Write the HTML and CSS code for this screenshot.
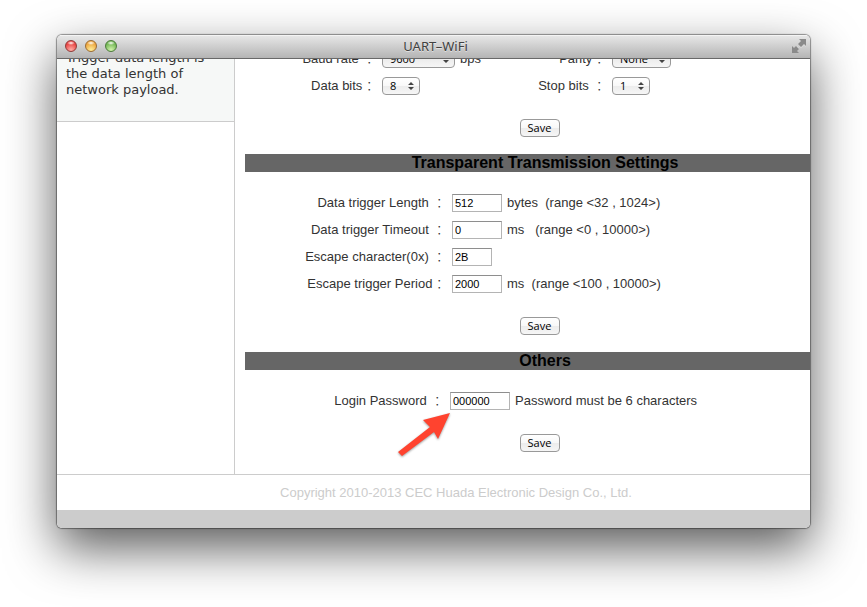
FILE: index.html
```html
<!DOCTYPE html>
<html lang="en">
<head>
<meta charset="utf-8">
<title>UART-WiFi</title>
<link rel="stylesheet" href="styles.css">
</head>
<body>
<div class="window">
  <header class="titlebar">
    <div class="lights">
      <button class="light red" type="button" aria-label="Close"></button>
      <button class="light amber" type="button" aria-label="Minimize"></button>
      <button class="light green" type="button" aria-label="Zoom"></button>
    </div>
    <h1 class="title">UART–WiFi</h1>
    <button class="expand" type="button" aria-label="Full screen">
      <svg viewBox="0 0 14 14" width="14" height="14"><path class="glint" d="M7 1H14V8L12 6L9 9L7 7L10 4Z"/><path class="glint" d="M0 8L2 10L5 7L7 9L4 12L6 14L0 15Z"/><path d="M7 0H14V7L12 5L9 8L6 5L9 2Z"/><path d="M0 7L2 9L4 7L7 10L5 12L7 14H0Z"/></svg>
    </button>
  </header>
  <div class="viewport">
    <div class="page">
      <div class="columns">
        <aside class="sidebar">
          <p class="help">Trigger data length is the data length of network payload.</p>
        </aside>
        <main class="main">
          <form class="section">
            <div class="pairs">
              <label for="baud">Baud rate&nbsp; <span lang="zh-CN">：</span></label>
              <div class="field"><span class="picker"><select id="baud" class="wide"><option>9600</option></select><svg viewBox="0 0 6 8" width="6" height="8"><path d="M3 0L6 3H0ZM3 8L6 5H0Z"/></svg></span> bps</div>
              <label for="parity">Parity <span lang="zh-CN">：</span></label>
              <div class="field"><span class="picker"><select id="parity" class="medium"><option>None</option></select><svg viewBox="0 0 6 8" width="6" height="8"><path d="M3 0L6 3H0ZM3 8L6 5H0Z"/></svg></span></div>
              <label for="databits">Data bits <span lang="zh-CN">：</span></label>
              <div class="field"><span class="picker"><select id="databits"><option>8</option></select><svg viewBox="0 0 6 8" width="6" height="8"><path d="M3 0L6 3H0ZM3 8L6 5H0Z"/></svg></span></div>
              <label for="stopbits">Stop bits&nbsp; <span lang="zh-CN">：</span></label>
              <div class="field"><span class="picker"><select id="stopbits"><option>1</option></select><svg viewBox="0 0 6 8" width="6" height="8"><path d="M3 0L6 3H0ZM3 8L6 5H0Z"/></svg></span></div>
            </div>
            <div class="actions"><button class="save" type="button">Save</button></div>
          </form>
          <form class="section">
            <h2>Transparent Transmission Settings</h2>
            <div class="rows">
              <label for="length">Data trigger Length&nbsp; <span lang="zh-CN">：</span></label>
              <div class="field"><input id="length" type="text" value="512"> bytes&nbsp; (range &lt;32 , 1024&gt;)</div>
              <label for="timeout">Data trigger Timeout&nbsp; <span lang="zh-CN">：</span></label>
              <div class="field"><input id="timeout" type="text" value="0"> ms&nbsp;&nbsp; (range &lt;0 , 10000&gt;)</div>
              <label for="escape">Escape character(0x)&nbsp; <span lang="zh-CN">：</span></label>
              <div class="field"><input id="escape" class="short" type="text" value="2B"></div>
              <label for="period">Escape trigger Period <span lang="zh-CN">：</span></label>
              <div class="field"><input id="period" type="text" value="2000"> ms&nbsp; (range &lt;100 , 10000&gt;)</div>
            </div>
            <div class="actions"><button class="save" type="button">Save</button></div>
          </form>
          <form class="section">
            <h2>Others</h2>
            <div class="rows login">
              <label for="password">Login Password&nbsp; <span lang="zh-CN">：</span></label>
              <div class="field"><input id="password" class="long" type="text" value="000000"> Password must be 6 characters
                <svg class="pointer" viewBox="0 0 56 48" width="56" height="48"><path d="M53 2L41 28L37 21L5 45L1 41L33 16L26 9Z"/></svg>
              </div>
            </div>
            <div class="actions"><button class="save" type="button">Save</button></div>
          </form>
        </main>
      </div>
      <footer class="footer">Copyright 2010-2013 CEC Huada Electronic Design Co., Ltd.</footer>
    </div>
  </div>
  <div class="statusbar"></div>
</div>
</body>
</html>
```
FILE: styles.css
```css
* { box-sizing: border-box; }

body {
  margin: 0;
  height: 100vh;
  padding: 35px 57px 79px;
  overflow: hidden;
  background: #fff;
  color: #333;
  font: 13px/18px "Liberation Sans", Arial, sans-serif;
}

h1, h2, p { margin: 0; }
button { padding: 0; border: 0; background: none; }
svg { display: block; }

.window {
  display: flex;
  flex-direction: column;
  height: 100%;
  overflow: hidden;
  border-radius: 5px;
  background: #fff;
  box-shadow: 0 0 1px 1px rgba(0, 0, 0, .4), 0 20px 50px rgba(0, 0, 0, .65);
}

.titlebar {
  flex: none;
  display: grid;
  grid-template-columns: 1fr auto 1fr;
  align-items: center;
  height: 24px;
  padding: 0 4px 2px 8px;
  border-top: 1px solid #f4f4f4;
  border-bottom: 1px solid #686868;
  background: linear-gradient(#e6e6e6, #b4b4b4);
}

.lights { display: flex; gap: 8px; }

.light {
  width: 12px;
  height: 12px;
  border: 1px solid;
  border-radius: 50%;
}

.red { border-color: #8f3a38; background: radial-gradient(ellipse 4px 2px at 50% 20%, #fff, transparent), radial-gradient(circle at 50% 90%, #ffb0a8, #e8403f 70%); }
.amber { border-color: #9a6b32; background: radial-gradient(ellipse 4px 2px at 50% 20%, #fff, transparent), radial-gradient(circle at 50% 90%, #fff09a, #eda43c 70%); }
.green { border-color: #4c7a3b; background: radial-gradient(ellipse 4px 2px at 50% 20%, #fff, transparent), radial-gradient(circle at 50% 90%, #d4f5ae, #70b552 70%); }

.title {
  color: #404040;
  font: 13px/18px "Noto Sans", "Open Sans", sans-serif;
  text-shadow: 0 1px 0 rgba(255, 255, 255, .5);
}

.expand { justify-self: end; fill: #8a8a8a; }
.glint { fill: #dcdcdc; }

.viewport {
  flex: 1;
  min-height: 0;
  display: flex;
  flex-direction: column;
  justify-content: flex-end;
  overflow: hidden;
}

.page { flex: none; min-width: 798px; }
.columns { display: flex; }

.sidebar {
  flex: none;
  width: 178px;
  border-right: 1px solid #ccc;
}

.help {
  padding: 5px 9px 23px;
  border-bottom: 1px solid #ccc;
  background: #f6f8f7;
  font: 13px/16px "DejaVu Sans", Verdana, sans-serif;
}

.main { flex: 1; padding: 0 10px 22px; }

.section + .section { margin-top: 17px; }

h2 {
  margin-bottom: 17px;
  background: #666;
  color: #000;
  font-size: 16px;
  line-height: 18px;
  text-align: center;
}

.pairs, .rows {
  display: grid;
  grid-auto-rows: 27px;
  align-items: center;
}

.pairs { grid-template-columns: 137px 142px 88px 1fr; }
.rows { grid-template-columns: 207px 1fr; }
.login { grid-template-columns: 205px 1fr; }

label { text-align: right; padding-right: 3px; white-space: pre; }
label span { font-family: "Noto Sans CJK SC", sans-serif; font-weight: 300; line-height: 1; }

.field {
  position: relative;
  display: flex;
  align-items: center;
  gap: 5px;
}

input {
  width: 50px;
  height: 18px;
  padding: 0 2px;
  border: 1px solid #b4b4b4;
  border-top-color: #8e8e8e;
  background: #fff;
  color: #000;
  font: 11px "Liberation Sans", Arial, sans-serif;
}

.short { width: 40px; }
.long { width: 60px; }

.picker { position: relative; }

.picker svg {
  position: absolute;
  top: 5px;
  right: 6px;
  fill: #444;
  pointer-events: none;
}

select, .save {
  display: block;
  height: 18px;
  border: 1px solid #999;
  border-radius: 4px;
  background: linear-gradient(#fff, #f8f8f8 50%, #ececec 50%, #f6f6f6);
  color: #000;
  font: 11px/16px "Open Sans", "Noto Sans", sans-serif;
}

select {
  width: 38px;
  padding: 0 7px;
  appearance: none;
}

.medium { width: 59px; }
.wide { width: 73px; }

.actions {
  padding: 20px 11px 0 0;
  text-align: center;
}

.save { width: 40px; margin: 0 auto; }

.pointer {
  position: absolute;
  top: 19px;
  left: -53px;
  fill: #ff432f;
  filter: drop-shadow(0 1px 1px rgba(0, 0, 0, .4));
}

.footer {
  height: 36px;
  border-top: 1px solid #ccc;
  color: #ccc;
  line-height: 35px;
  text-align: center;
}

.statusbar { flex: none; height: 18px; background: #ccc; }
```
